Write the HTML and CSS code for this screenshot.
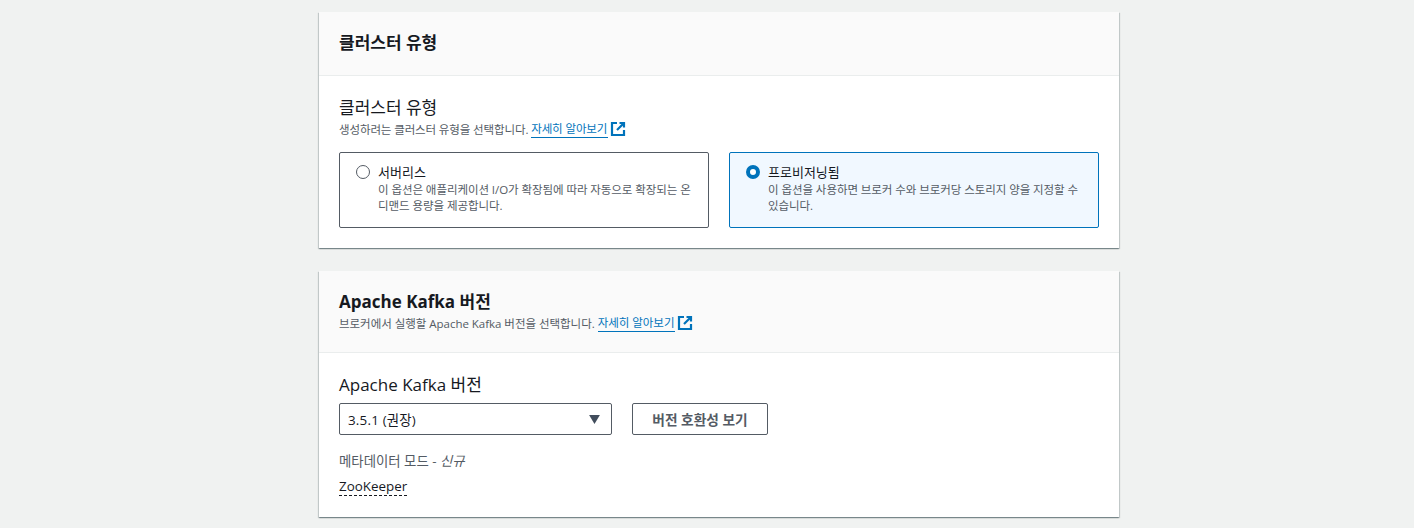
FILE: index.html
```html
<!DOCTYPE html>
<html lang="ko">
<head>
<meta charset="utf-8">
<title>클러스터</title>
<link rel="stylesheet" href="styles.css">
</head>
<body>
<main class="column">
  <section class="card card-first">
    <header class="card-head head-simple">
      <h2 class="title">클러스터 유형</h2>
    </header>
    <div class="card-body body-type">
      <div class="label">클러스터 유형</div>
      <div class="desc desc-type">생성하려는 클러스터 유형을 선택합니다. <a class="link">자세히 알아보기</a>
        <svg class="ext" viewBox="0 0 16 16"><path d="M7 2H2v12h12V9M9.5 2H14v4.5M14 2 7 9" fill="none" stroke="#0073bb" stroke-width="2.2"/></svg>
      </div>
      <div class="tiles">
        <div class="tile">
          <span class="radio"></span>
          <div class="tile-text">
            <div class="tile-title">서버리스</div>
            <div class="tile-desc">이 옵션은 애플리케이션 I/O가 확장됨에 따라 자동으로 확장되는 온디맨드 용량을 제공합니다.</div>
          </div>
        </div>
        <div class="tile tile-on">
          <span class="radio radio-on"></span>
          <div class="tile-text">
            <div class="tile-title">프로비저닝됨</div>
            <div class="tile-desc">이 옵션을 사용하면 브로커 수와 브로커당 스토리지 양을 지정할 수 있습니다.</div>
          </div>
        </div>
      </div>
    </div>
  </section>
  <section class="card">
    <header class="card-head head-desc">
      <h2 class="title title-latin">Apache Kafka 버전</h2>
      <div class="desc desc-head">브로커에서 실행할 Apache Kafka 버전을 선택합니다. <a class="link">자세히 알아보기</a>
        <svg class="ext" viewBox="0 0 16 16"><path d="M7 2H2v12h12V9M9.5 2H14v4.5M14 2 7 9" fill="none" stroke="#0073bb" stroke-width="2.2"/></svg>
      </div>
    </header>
    <div class="card-body body-version">
      <div class="label">Apache Kafka 버전</div>
      <div class="controls">
        <div class="select">
          <span class="select-value">3.5.1 (권장)</span>
          <svg class="caret" viewBox="0 0 12 10"><path d="M0 0h12L6 10z" fill="#414d5c"/></svg>
        </div>
        <button class="btn" type="button">버전 호환성 보기</button>
      </div>
      <div class="meta-label">메타데이터 모드 - <i>신규</i></div>
      <div class="meta-value"><span class="dashed">ZooKeeper</span></div>
    </div>
  </section>
</main>
</body>
</html>
```
FILE: styles.css
```css
html, body {
  margin: 0;
  padding: 0;
  height: 528px;
  overflow: hidden;
  background: #f0f2f1;
}
body {
  font-family: "Open Sans", "Noto Sans CJK KR", sans-serif;
  color: #16191f;
  font-size: 14px;
}
.column {
  width: 800px;
  margin-left: 319px;
  padding-top: 12px;
  display: flex;
  flex-direction: column;
  gap: 23px;
}
.card {
  background: #fff;
  box-shadow: 0 1px 1px 0 rgba(0, 28, 36, .3), 1px 1px 1px 0 rgba(0, 28, 36, .15), -1px 1px 1px 0 rgba(0, 28, 36, .15);
}
.card-head {
  background: #fafafa;
  border-bottom: 1px solid #eaeded;
  box-sizing: border-box;
  padding: 0 20px;
}
.head-simple {
  height: 64px;
  padding-top: 20px;
}
.head-desc {
  height: 82px;
  padding-top: 20px;
}
.title {
  margin: 0;
  font-size: 17px;
  line-height: 22px;
  font-weight: 700;
  color: #16191f;
}
.card-body {
  padding: 20px 20px 0;
}
.body-type { height: 172px; box-sizing: border-box; padding-top: 21px; }
.body-version { height: 164px; box-sizing: border-box; padding-top: 21px; }
.label {
  font-size: 17px;
  line-height: 22px;
  font-weight: 400;
}
.desc {
  font-size: 11.5px;
  line-height: 17px;
  letter-spacing: -0.1px;
  color: #545b64;
  display: flex;
  align-items: center;
  white-space: pre-wrap;
}
.desc-type { margin-top: 1px; letter-spacing: -0.12px; }
.desc-head { margin-top: 1px; letter-spacing: -0.03px; }
.link {
  color: #0073bb;
  border-bottom: 1px solid #0073bb;
  line-height: 16px;
  margin-top: 1px;
  padding-right: 1px;
}
.ext {
  width: 16px;
  height: 16px;
  margin-left: 2px;
}
.tiles {
  display: grid;
  grid-template-columns: 370px 370px;
  gap: 20px;
  margin-top: 14px;
}
.tile {
  box-sizing: border-box;
  height: 76px;
  border: 1px solid #545b64;
  border-radius: 2px;
  padding: 10px 16px;
  display: flex;
  gap: 8px;
}
.tile-on {
  border-color: #0073bb;
  background: #f1f8ff;
}
.radio {
  box-sizing: border-box;
  width: 14px;
  height: 14px;
  margin-top: 2px;
  flex: none;
  border: 1.5px solid #545b64;
  border-radius: 50%;
  background: #fff;
}
.radio-on {
  border: 4px solid #0073bb;
}
.tile-title {
  font-size: 13px;
  line-height: 19px;
  color: #16191f;
}
.tile-desc {
  font-size: 11.5px;
  line-height: 16px;
  letter-spacing: -0.07px;
  color: #545b64;
  word-break: break-all;
}
.controls {
  display: flex;
  gap: 20px;
  margin-top: 7px;
}
.select {
  box-sizing: border-box;
  width: 273px;
  height: 32px;
  border: 1px solid #545b64;
  border-radius: 2px;
  padding: 0 11px 0 8px;
  display: flex;
  align-items: center;
  justify-content: space-between;
  font-size: 13.4px;
  color: #16191f;
}
.select-value { letter-spacing: .2px; }
.caret {
  width: 11px;
  height: 9px;
}
.btn {
  box-sizing: border-box;
  width: 136px;
  height: 32px;
  border: 1px solid #545b64;
  border-radius: 2px;
  background: #fff;
  font-family: inherit;
  font-size: 13.7px;
  font-weight: 700;
  color: #545b64;
  padding: 0;
}
.meta-label {
  margin-top: 17px;
  font-size: 13.4px;
  line-height: 18px;
  color: #545b64;
}
.meta-value {
  margin-top: 7px;
  font-size: 13.4px;
  line-height: 18px;
}
.dashed {
  border-bottom: 1px dashed #16191f;
  display: inline-block;
  line-height: 17px;
}
```
